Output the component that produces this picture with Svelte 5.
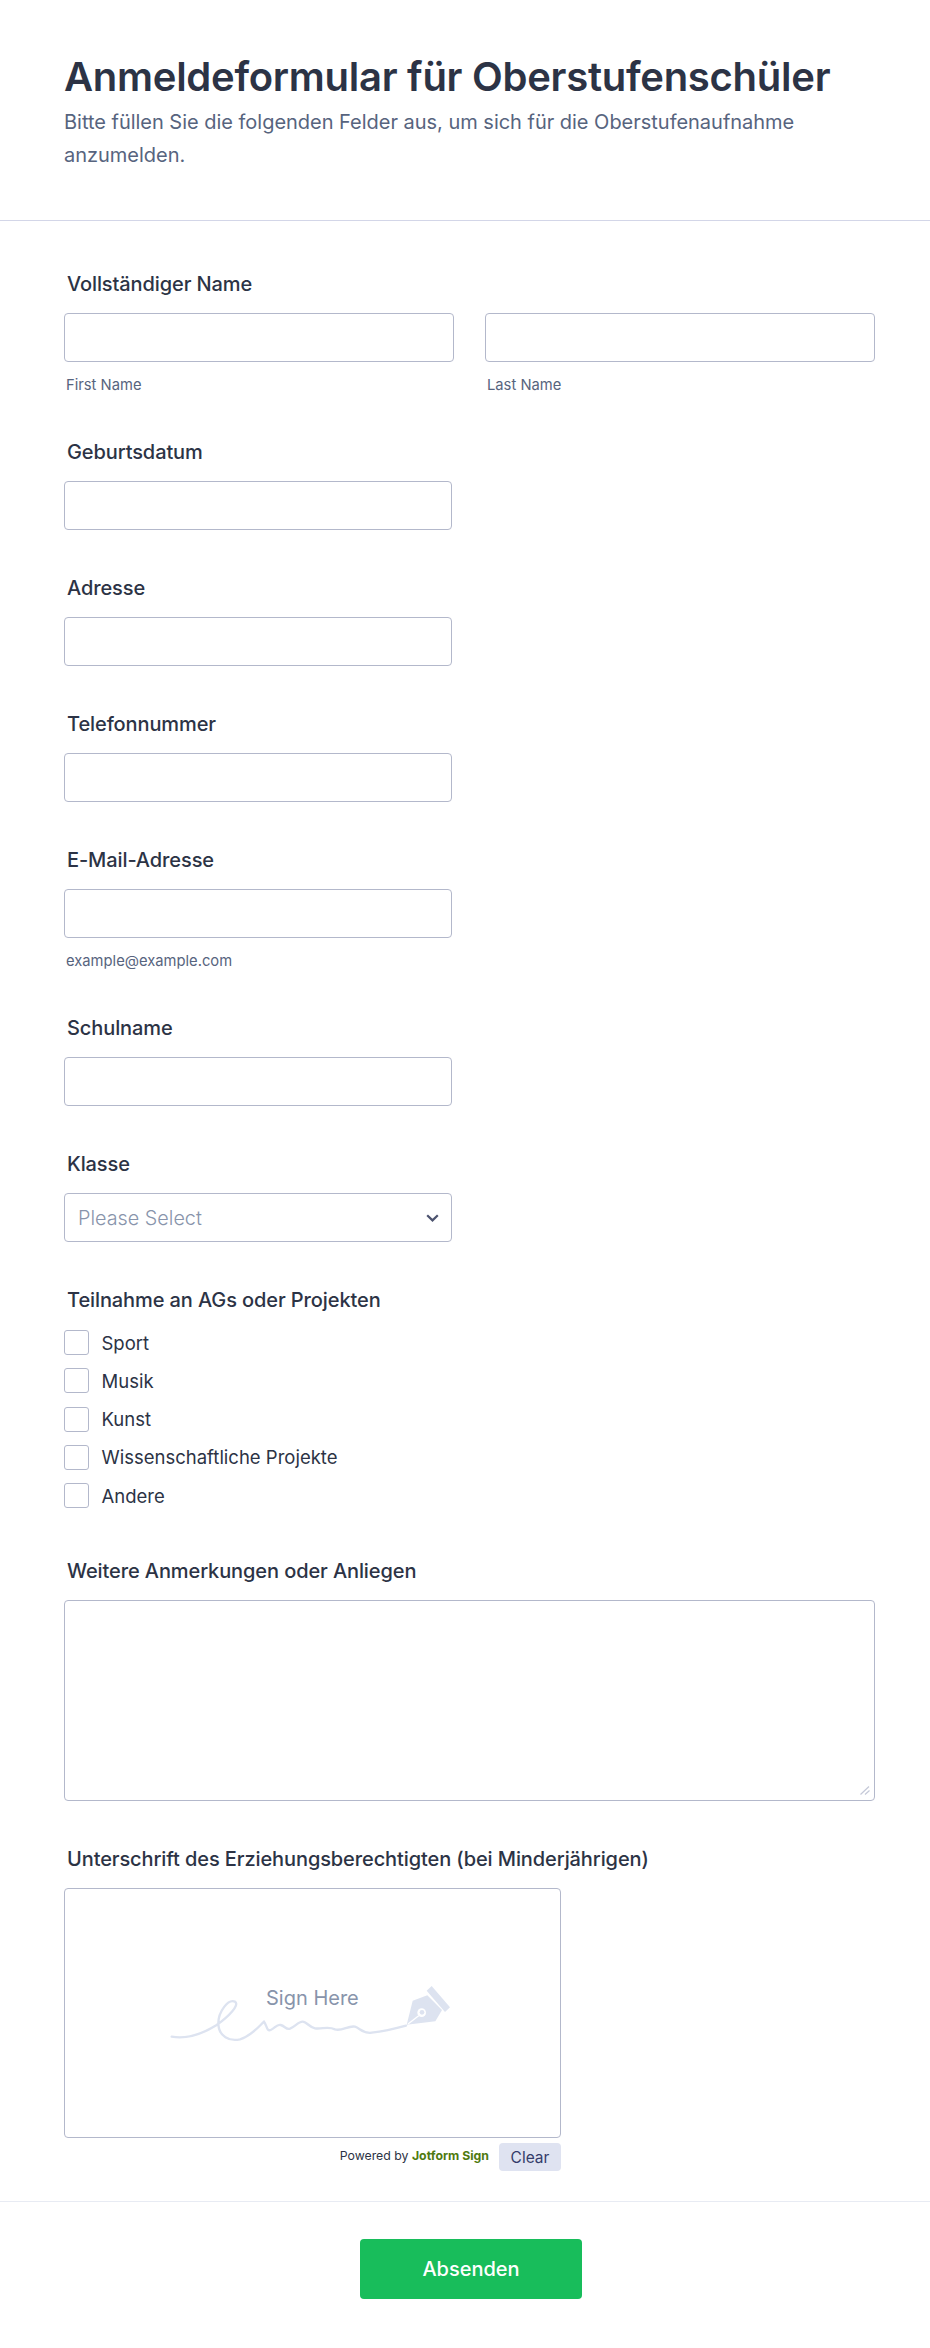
<script>
  const activities = ['Sport', 'Musik', 'Kunst', 'Wissenschaftliche Projekte', 'Andere'];
  const singles = [
    { label: 'Geburtsdatum' },
    { label: 'Adresse' },
    { label: 'Telefonnummer' },
    { label: 'E-Mail-Adresse', hint: 'example@example.com' },
    { label: 'Schulname' }
  ];
</script>

<div class="form">
  <header class="head">
    <h1>Anmeldeformular für Oberstufenschüler</h1>
    <p>Bitte füllen Sie die folgenden Felder aus, um sich für die Oberstufenaufnahme anzumelden.</p>
  </header>

  <main class="fields">
    <div class="field">
      <div class="label">Vollständiger Name</div>
      <div class="name-row">
        <div class="name-col">
          <input type="text" />
          <div class="hint">First Name</div>
        </div>
        <div class="name-col">
          <input type="text" />
          <div class="hint">Last Name</div>
        </div>
      </div>
    </div>

    {#each singles as f}
      <div class="field">
        <div class="label">{f.label}</div>
        <input class="short" type="text" />
        {#if f.hint}
          <div class="hint">{f.hint}</div>
        {/if}
      </div>
    {/each}

    <div class="field">
      <div class="label">Klasse</div>
      <div class="select-wrap">
        <select>
          <option>Please Select</option>
        </select>
        <svg class="chevron" width="13" height="8" viewBox="0 0 13 8" aria-hidden="true">
          <path d="M1.2 1.2 6.5 6.4l5.3-5.2" fill="none" stroke="#4c536f" stroke-width="2.2" />
        </svg>
      </div>
    </div>

    <div class="field checks-field">
      <div class="label">Teilnahme an AGs oder Projekten</div>
      <div class="checks">
        {#each activities as a}
          <label class="check">
            <input type="checkbox" />
            <span>{a}</span>
          </label>
        {/each}
      </div>
    </div>

    <div class="field">
      <div class="label">Weitere Anmerkungen oder Anliegen</div>
      <div class="area-wrap">
        <textarea></textarea>
        <svg class="grip" width="10" height="9" viewBox="0 0 10 9" aria-hidden="true">
          <path d="M0.5 8.5 9 0.5M5 8.5 9.5 4.5" fill="none" stroke="#c5c9d8" stroke-width="1.2" />
        </svg>
      </div>
    </div>

    <div class="field sign-field">
      <div class="label">Unterschrift des Erziehungsberechtigten (bei Minderjährigen)</div>
      <div class="sign-box">
        <svg class="scribble" width="330" height="110" viewBox="0 0 990 330" aria-hidden="true">
          <path
            d="M65 260C110 268 160 250 200 225C235 200 270 165 255 155C235 145 205 185 205 220C205 260 240 275 270 268C305 258 330 225 342 215C350 225 350 245 362 240C375 235 380 222 392 225C405 228 408 240 420 236C435 230 445 215 458 215C470 215 478 232 495 235C515 238 535 228 555 238C575 245 595 226 615 230C630 235 640 252 665 248C700 244 735 236 768 227"
            fill="none"
            stroke="#dde3f0"
            stroke-width="7"
            stroke-linecap="round"
          />
          <path d="M770 224 788 152 832 136 876 180 856 214Z" fill="#dde3f0" />
          <circle cx="815" cy="188" r="13" fill="#fff" />
          <circle cx="816" cy="187" r="7" fill="#dde3f0" />
          <path d="M806 197 774 222" stroke="#fff" stroke-width="4" />
          <path d="M845 108 900 172 885 186 830 122Z" fill="#dde3f0" />
        </svg>
        <span class="sign-text">Sign Here</span>
      </div>
      <div class="sign-foot">
        <span class="powered">Powered by <b>Jotform Sign</b></span>
        <button type="button" class="clear">Clear</button>
      </div>
    </div>
  </main>

  <footer class="foot">
    <button type="button" class="submit">Absenden</button>
  </footer>
</div>

<style>
  :global(body) {
    background: #fff;
  }

  .form {
    font-family: Inter, 'Liberation Sans', sans-serif;
    color: #2c3345;
    height: 2348px;
    overflow: hidden;
  }

  .head {
    padding: 54px 64px 0;
    height: 221px;
    box-sizing: border-box;
    border-bottom: 1px solid #d3d6e8;
  }

  h1 {
    margin: 0;
    font-size: 40px;
    line-height: 46px;
    font-weight: 600;
    letter-spacing: -0.27px;
  }

  .head p {
    margin: 6px 0 0;
    font-size: 20px;
    line-height: 33px;
    color: #57647e;
    letter-spacing: -0.02px;
  }

  .fields {
    padding: 49px 55px 0 64px;
  }

  .field {
    margin-bottom: 44px;
  }

  .label {
    font-size: 20px;
    line-height: 28px;
    font-weight: 500;
    letter-spacing: -0.1px;
    padding-left: 3px;
    margin-bottom: 15px;
  }

  input[type='text'],
  select,
  textarea {
    display: block;
    box-sizing: border-box;
    background: #fff;
    border: 1px solid #b3b8cb;
    border-radius: 4px;
    height: 49px;
    width: 100%;
    outline: none;
  }

  .short {
    width: 388px !important;
  }

  .name-row {
    display: flex;
    gap: 31px;
  }

  .name-col {
    width: 390px;
  }

  .hint {
    font-size: 14.75px;
    line-height: 17px;
    color: #57647e;
    padding-left: 2px;
    margin-top: 15px;
  }

  .select-wrap {
    position: relative;
    width: 388px;
  }

  select {
    appearance: none;
    font-family: inherit;
    font-size: 19.8px;
    font-weight: 300;
    color: #8894ab;
    padding: 0 13px;
  }

  .chevron {
    position: absolute;
    right: 13px;
    top: 21px;
  }

  .checks {
    display: flex;
    flex-direction: column;
    gap: 13.33px;
    margin-top: 16px;
  }

  .check {
    display: flex;
    align-items: center;
    gap: 12.5px;
    font-size: 18.5px;
    color: #2c3345;
    height: 25px;
  }

  .checks-field {
    margin-bottom: 49px;
  }

  .label:has(+ .checks) {
    margin-bottom: 0;
  }

  .check input {
    appearance: none;
    margin: 0;
    width: 25px;
    height: 25px;
    box-sizing: border-box;
    border: 1px solid #b3b8cb;
    border-radius: 3px;
    background: #fff;
  }

  .area-wrap {
    position: relative;
  }

  textarea {
    height: 201px;
    resize: none;
  }

  .grip {
    position: absolute;
    right: 5px;
    bottom: 6px;
  }

  .sign-field {
    margin-bottom: 30px;
  }

  .sign-box {
    position: relative;
    box-sizing: border-box;
    width: 497px;
    height: 250px;
    border: 1px solid #b3b8cb;
    border-radius: 4px;
  }

  .scribble {
    position: absolute;
    left: 85px;
    top: 61px;
  }

  .sign-text {
    position: absolute;
    left: 201px;
    top: 97px;
    font-size: 20px;
    color: #8894ab;
  }

  .sign-foot {
    width: 497px;
    display: flex;
    justify-content: flex-end;
    align-items: flex-start;
    gap: 10px;
    margin-top: 5px;
  }

  .powered {
    font-size: 12.3px;
    line-height: 20px;
    color: #2c3345;
    margin-top: 3px;
  }

  .powered b {
    color: #4f7a10;
    font-weight: 700;
  }

  .clear {
    font-family: inherit;
    font-size: 15.5px;
    width: 62px;
    height: 28px;
    padding: 0;
    border: 0;
    border-radius: 4px;
    background: #dfe3f1;
    color: #343c6a;
  }

  .foot {
    border-top: 1px solid #e8ebf3;
    padding-top: 37px;
    display: flex;
    justify-content: center;
  }

  .submit {
    font-family: inherit;
    font-size: 20px;
    font-weight: 500;
    width: 222px;
    height: 60px;
    border: 0;
    border-radius: 4px;
    background: #18bd5b;
    color: #fff;
    margin-left: 12px;
  }
</style>
